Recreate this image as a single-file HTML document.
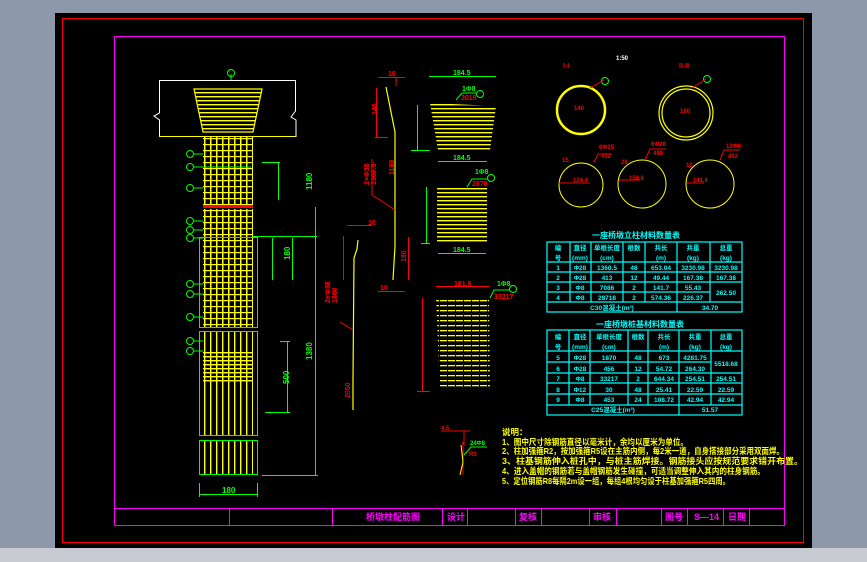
<!DOCTYPE html>
<html><head><meta charset="utf-8"><style>
html,body{margin:0;padding:0;width:867px;height:562px;overflow:hidden;background:#8d99aa}
svg{display:block}
text{font-family:"Liberation Sans","Noto Sans CJK SC",sans-serif;font-weight:bold}
</style></head><body>
<svg width="867" height="562" viewBox="0 0 867 562" xmlns="http://www.w3.org/2000/svg">
<defs>
<pattern id="hs" width="6" height="4" patternUnits="userSpaceOnUse"><rect width="6" height="1.4" fill="#ff0"/></pattern>
<pattern id="hs2" width="8" height="5" patternUnits="userSpaceOnUse"><rect width="7" height="1.3" fill="#ff0"/></pattern>
<pattern id="col" width="6" height="6" patternUnits="userSpaceOnUse"><rect width="1.5" height="6" fill="#ff0"/><rect width="6" height="1.2" fill="#ff0"/></pattern>
<pattern id="colv" width="6" height="8" patternUnits="userSpaceOnUse"><rect width="1.4" height="8" fill="#ff0"/></pattern>
</defs>
<rect x="0" y="548" width="867" height="14" fill="#c8cad2"/>
<rect x="55" y="13" width="757" height="535" fill="#000"/>
<rect x="62.5" y="18.5" width="741" height="524" fill="none" stroke="#f00" stroke-width="1"/>
<rect x="114.5" y="36.5" width="670" height="489" fill="none" stroke="#f0f" stroke-width="1"/>
<!-- title bar -->
<g stroke="#f0f" stroke-width="1">
<line x1="114" y1="508.5" x2="785" y2="508.5"/>
<line x1="229.5" y1="508" x2="229.5" y2="525"/><line x1="332.5" y1="508" x2="332.5" y2="525"/>
<line x1="442.5" y1="508" x2="442.5" y2="525"/><line x1="467.5" y1="508" x2="467.5" y2="525"/>
<line x1="515.5" y1="508" x2="515.5" y2="525"/><line x1="541.5" y1="508" x2="541.5" y2="525"/>
<line x1="589.5" y1="508" x2="589.5" y2="525"/><line x1="616.5" y1="508" x2="616.5" y2="525"/>
<line x1="661.5" y1="508" x2="661.5" y2="525"/><line x1="687.5" y1="508" x2="687.5" y2="525"/>
<line x1="723.5" y1="508" x2="723.5" y2="525"/><line x1="749.5" y1="508" x2="749.5" y2="525"/>
</g>
<g fill="#f0f" font-size="9">
<text x="366" y="520">桥墩柱配筋图</text><text x="447" y="520">设计</text><text x="519" y="520">复核</text>
<text x="593" y="520">审核</text><text x="665" y="520">图号</text><text x="694" y="520">S—14</text><text x="728" y="520">日期</text>
</g>
<!-- left elevation -->
<path d="M203 136.5H159.5V120L154 116L159.5 113V80.5H295.5V111L291 117L296 120V136.5H252" fill="none" stroke="#fff"/>
<line x1="159" y1="136.5" x2="296" y2="136.5" stroke="#ff0"/>
<path d="M194 89L262 89L253 132L203 132Z" fill="url(#hs)"/>
<path d="M194 89L262 89L253 132L203 132Z" fill="none" stroke="#ff0" stroke-width="1.2"/>
<rect x="203" y="136" width="50" height="69" fill="url(#col)"/>
<rect x="203" y="205" width="50" height="3" fill="#f00"/>
<rect x="203" y="209" width="50" height="118" fill="url(#col)"/>
<rect x="203" y="332" width="50" height="104" fill="url(#colv)"/>
<rect x="203" y="352" width="50" height="30" fill="url(#hs)"/>
<rect x="203" y="441" width="50" height="34" fill="url(#colv)"/>
<g fill="none" stroke="#0f0">
<rect x="199.5" y="237.5" width="58" height="90"/><rect x="199.5" y="331.5" width="58" height="104"/><rect x="199.5" y="440.5" width="58" height="34"/>
<line x1="231" y1="80" x2="231" y2="74"/><circle cx="231" cy="73" r="3.5"/>
<line x1="315.5" y1="207" x2="315.5" y2="475"/><line x1="262" y1="475.5" x2="318" y2="475.5"/>
<line x1="280" y1="341.5" x2="290" y2="341.5"/><line x1="287.5" y1="341" x2="287.5" y2="412"/><line x1="265" y1="412.5" x2="290" y2="412.5"/>
<line x1="262" y1="162.5" x2="280" y2="162.5"/><line x1="278.5" y1="162" x2="278.5" y2="200"/>
<line x1="199.5" y1="483" x2="199.5" y2="497"/><line x1="257.5" y1="483" x2="257.5" y2="497"/><line x1="199" y1="494.5" x2="258" y2="494.5"/>
<line x1="253" y1="236.5" x2="317" y2="236.5"/><line x1="272.5" y1="238" x2="272.5" y2="280"/><line x1="292.5" y1="238" x2="292.5" y2="280"/>
<circle cx="190" cy="154" r="3.5"/><circle cx="190" cy="167" r="3.5"/><circle cx="190" cy="188" r="3.5"/>
<circle cx="190" cy="221" r="3.5"/><circle cx="190" cy="230" r="3.5"/><circle cx="190" cy="238" r="3.5"/>
<circle cx="190" cy="284" r="3.5"/><circle cx="190" cy="294" r="3.5"/><circle cx="190" cy="317" r="3.5"/>
<circle cx="190" cy="341" r="3.5"/><circle cx="190" cy="351" r="3.5"/>
<path d="M194 154H203M194 167H251M194 188H203M194 221H203M194 230H203M194 238H203M194 284H203M194 294H203M194 317H203M194 341H203M194 351H203"/>
</g>
<g fill="#0f0" font-size="8"><text x="312" y="190" transform="rotate(-90 312 190)">1180</text><text x="312" y="360" transform="rotate(-90 312 360)">1380</text>
<text x="290" y="260" transform="rotate(-90 290 260)">180</text><text x="289" y="384" transform="rotate(-90 289 384)">500</text><text x="222" y="493">180</text></g>
<!-- middle bent bars -->
<g fill="none" stroke="#ff0" stroke-width="1.2">
<path d="M386 87L395 132V246L393 280"/><path d="M358 240L357 249L354 258L353 380L353 410"/>
</g>
<g fill="none" stroke="#f00">
<line x1="378" y1="77.5" x2="405" y2="77.5"/><line x1="396" y1="77" x2="396" y2="86"/>
<line x1="376.5" y1="88" x2="376.5" y2="138"/><line x1="375" y1="137.5" x2="388" y2="137.5"/>
<path d="M372 159V195L380 200L395 210"/>
<line x1="347" y1="225.5" x2="372" y2="225.5"/><line x1="343.5" y1="236" x2="343.5" y2="280"/>
<line x1="408.5" y1="237" x2="408.5" y2="280"/>
<line x1="378" y1="291.5" x2="405" y2="291.5"/>
<path d="M340 322L353 330"/>
<line x1="422.5" y1="298" x2="422.5" y2="391"/><line x1="417" y1="391.5" x2="430" y2="391.5"/>
</g>
<g fill="#f00" font-size="7">
<text x="388" y="76">10</text><text x="377" y="115" transform="rotate(-90 377 115)">140</text>
<text x="369" y="185" transform="rotate(-90 369 185)">2×Φ38</text><text x="376" y="185" transform="rotate(-90 376 185)">1360.5</text>
<text x="394" y="175" transform="rotate(-90 394 175)">1180</text><text x="368" y="225">10</text>
<text x="406" y="262" transform="rotate(-90 406 262)">180</text><text x="380" y="290">10</text>
<text x="330" y="303" transform="rotate(-90 330 303)">2×Φ38</text><text x="337" y="303" transform="rotate(-90 337 303)">1860</text>
<text x="350" y="398" transform="rotate(-90 350 398)">2050</text>
</g>
<g fill="none" stroke="#0f0">
<line x1="429" y1="76.5" x2="496" y2="76.5"/><line x1="438" y1="161.5" x2="487" y2="161.5"/><line x1="438" y1="253.5" x2="486" y2="253.5"/>
<line x1="417.5" y1="105" x2="417.5" y2="150"/><line x1="411" y1="150.5" x2="430" y2="150.5"/>
<line x1="426.5" y1="187" x2="426.5" y2="243"/><line x1="421" y1="243.5" x2="430" y2="243.5"/>
<circle cx="480" cy="94" r="3.5"/><circle cx="491" cy="178" r="3.5"/><circle cx="513" cy="289" r="3.5"/>
<path d="M456 100L462 93H477M467 187L472 179H488M490 298L494 290H510"/>
</g>
<path d="M430 103L496 106L490 150L438 150Z" fill="url(#hs)"/>
<rect x="437" y="187" width="50" height="57" fill="url(#hs)"/>
<path d="M436 298L489 298L490 390L440 390Z" fill="url(#hs2)"/>
<g fill="#0f0" font-size="7"><text x="453" y="75">184.5</text><text x="453" y="160">184.5</text><text x="453" y="252">184.5</text>
<text x="462" y="91">1Φ8</text><text x="475" y="174">1Φ8</text><text x="497" y="286">1Φ8</text></g>
<g fill="#f00" font-size="7"><text x="461" y="100">3019</text><text x="472" y="186">2878</text><text x="494" y="299">33217</text><text x="454" y="286">181.5</text>
<line x1="436" y1="286.5" x2="489" y2="286.5" stroke="#f00"/></g>
<!-- circles -->
<text x="616" y="60" fill="#fff" font-size="6">1:50</text>
<text x="563" y="68" fill="#f00" font-size="7">I-I</text><text x="679" y="68" fill="#f00" font-size="7">II-II</text>
<circle cx="581" cy="110" r="24" fill="none" stroke="#ff0" stroke-width="2.5"/>
<circle cx="686" cy="113" r="27" fill="none" stroke="#ff0" stroke-width="1.2"/><circle cx="686" cy="113" r="24" fill="none" stroke="#ff0" stroke-width="1.2"/>
<circle cx="605" cy="81" r="3.5" fill="none" stroke="#0f0"/><circle cx="707" cy="79" r="3.5" fill="none" stroke="#0f0"/>
<circle cx="581" cy="185" r="22" fill="none" stroke="#ff0"/><circle cx="642" cy="184" r="24" fill="none" stroke="#ff0"/><circle cx="710" cy="184" r="24" fill="none" stroke="#ff0"/>
<g stroke="#f00" fill="none"><line x1="559" y1="183" x2="590" y2="183"/><line x1="619" y1="180" x2="640" y2="180"/><line x1="687" y1="183" x2="704" y2="183"/>
<path d="M594 162L598 154H612M645 160L650 149H666M720 160L724 150H740"/><path d="M590 88L604 80M692 88L706 79"/></g>
<g fill="#f00" font-size="6"><text x="573" y="182">124.4</text><text x="629" y="180">158.6</text><text x="693" y="182">141.6</text>
<text x="599" y="149">6Φ25</text><text x="601" y="158">412</text><text x="651" y="146">6Φ28</text><text x="653" y="155">480</text><text x="726" y="148">12Φ8</text><text x="728" y="158">453</text>
<text x="562" y="162">15</text><text x="621" y="164">28</text><text x="686" y="167">10</text><text x="574" y="110">140</text><text x="680" y="113">160</text></g>
<!-- tables -->
<g fill="#0ff" font-size="8"><text x="592" y="238">一座桥墩立柱材料数量表</text><text x="596" y="327">一座桥墩桩基材料数量表</text></g>
<g fill="none" stroke="#0ff" stroke-width="1.2">
<rect x="547" y="242" width="195" height="70"/>
<path d="M547 262H742M547 272H742M547 282H742M547 292H710M547 302H742M570 242V302M591 242V302M623 242V302M645 242V302M677 242V312M710 242V302"/>
<rect x="547" y="330" width="195" height="85"/>
<path d="M547 351H742M547 362H711M547 373H742M547 383H742M547 394H742M547 405H742M569 330V405M590 330V405M628 330V405M648 330V405M679 330V415M711 330V405"/>
</g>
<g fill="#0ff" font-size="6.5" text-anchor="middle">
<text x="558" y="250">编</text><text x="558" y="260">号</text><text x="580" y="250">直径</text><text x="580" y="260">(mm)</text><text x="607" y="250">单根长度</text><text x="607" y="260">(cm)</text><text x="634" y="250">根数</text><text x="661" y="250">共长</text><text x="661" y="260">(m)</text><text x="693" y="250">共重</text><text x="693" y="260">(kg)</text><text x="726" y="250">总重</text><text x="726" y="260">(kg)</text>
<text x="558" y="270">1</text><text x="580" y="270">Φ28</text><text x="607" y="270">1360.5</text><text x="634" y="270">48</text><text x="661" y="270">653.04</text><text x="693" y="270">3230.98</text><text x="726" y="270">3230.98</text>
<text x="558" y="280">2</text><text x="580" y="280">Φ28</text><text x="607" y="280">413</text><text x="634" y="280">12</text><text x="661" y="280">49.44</text><text x="693" y="280">167.38</text><text x="726" y="280">167.38</text>
<text x="558" y="290">3</text><text x="580" y="290">Φ8</text><text x="607" y="290">7086</text><text x="634" y="290">2</text><text x="661" y="290">141.7</text><text x="693" y="290">55.43</text><text x="726" y="295">262.50</text>
<text x="558" y="300">4</text><text x="580" y="300">Φ8</text><text x="607" y="300">28718</text><text x="634" y="300">2</text><text x="661" y="300">574.36</text><text x="693" y="300">226.37</text>
<text x="612" y="310">C30混凝土(m³)</text><text x="710" y="310">34.70</text>
<text x="558" y="339">编</text><text x="558" y="349">号</text><text x="580" y="339">直径</text><text x="580" y="349">(mm)</text><text x="609" y="339">单根长度</text><text x="609" y="349">(cm)</text><text x="638" y="339">根数</text><text x="664" y="339">共长</text><text x="664" y="349">(m)</text><text x="695" y="339">共重</text><text x="695" y="349">(kg)</text><text x="726" y="339">总重</text><text x="726" y="349">(kg)</text>
<text x="558" y="360">5</text><text x="580" y="360">Φ28</text><text x="609" y="360">1870</text><text x="638" y="360">48</text><text x="664" y="360">673</text><text x="695" y="360">4281.75</text><text x="726" y="366">5518.68</text>
<text x="558" y="371">6</text><text x="580" y="371">Φ28</text><text x="609" y="371">456</text><text x="638" y="371">12</text><text x="664" y="371">54.72</text><text x="695" y="371">264.30</text>
<text x="558" y="381">7</text><text x="580" y="381">Φ8</text><text x="609" y="381">33217</text><text x="638" y="381">2</text><text x="664" y="381">644.34</text><text x="695" y="381">254.51</text><text x="726" y="381">254.51</text>
<text x="558" y="392">8</text><text x="580" y="392">Φ12</text><text x="609" y="392">30</text><text x="638" y="392">48</text><text x="664" y="392">25.41</text><text x="695" y="392">22.59</text><text x="726" y="392">22.59</text>
<text x="558" y="402">9</text><text x="580" y="402">Φ8</text><text x="609" y="402">453</text><text x="638" y="402">24</text><text x="664" y="402">108.72</text><text x="695" y="402">42.94</text><text x="726" y="402">42.94</text>
<text x="613" y="412">C25混凝土(m³)</text><text x="710" y="412">51.57</text>
</g>
<!-- small detail -->
<g stroke="#f00" fill="none"><path d="M441 431H470M464 431V445M463 442V475"/></g>
<path d="M461 445L463 462L460 475" stroke="#ff0" fill="none"/><path d="M464 455L471 447H487" stroke="#0f0" fill="none"/>
<g fill="#f00" font-size="6"><text x="441" y="430">4.5</text><text x="469" y="456">R3</text></g><text x="470" y="445" fill="#0f0" font-size="6">24Φ8</text>
<!-- notes -->
<g fill="#ff0" font-size="8.5">
<text x="502" y="435">说明：</text>
<text x="502" y="445" textLength="186" lengthAdjust="spacingAndGlyphs">1、图中尺寸除钢筋直径以毫米计，余均以厘米为单位。</text>
<text x="502" y="454" textLength="282" lengthAdjust="spacingAndGlyphs">2、柱加强箍R2，按加强箍R5设在主筋内侧，每2米一道，自身搭接部分采用双面焊。</text>
<text x="502" y="464" textLength="301" lengthAdjust="spacingAndGlyphs">3、柱基钢筋伸入桩孔中，与桩主筋焊接。钢筋接头应按规范要求错开布置。</text>
<text x="502" y="474" textLength="263" lengthAdjust="spacingAndGlyphs">4、进入盖帽的钢筋若与盖帽钢筋发生碰撞，可适当调整伸入其内的柱身钢筋。</text>
<text x="502" y="484" textLength="228" lengthAdjust="spacingAndGlyphs">5、定位钢筋R8每隔2m设一组，每组4根均匀设于柱基加强箍R5四周。</text>
</g>
</svg>
</body></html>
